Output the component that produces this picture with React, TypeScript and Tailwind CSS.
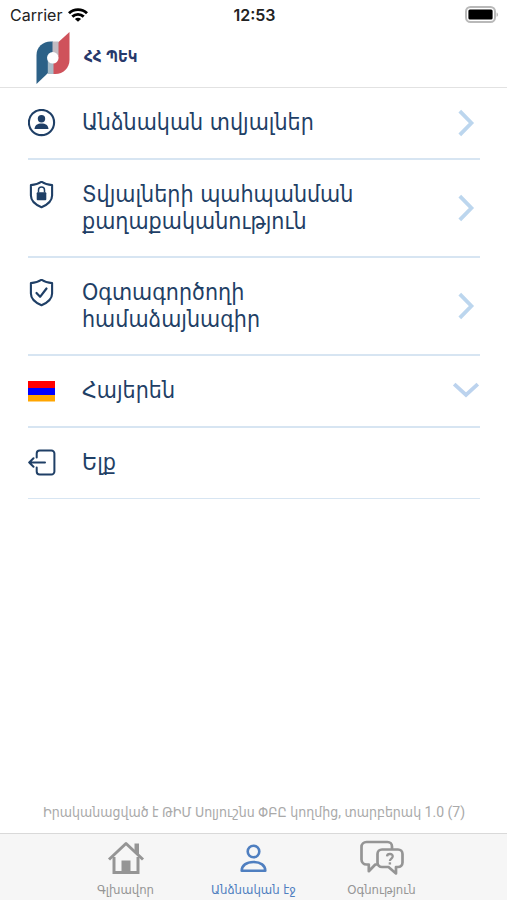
import React, { useState } from "react";

interface IconProps {
  className?: string;
}

const WifiIcon: React.FC<IconProps> = ({ className }) => (
  <svg viewBox="0 0 20 14" className={className} fill="none" stroke="currentColor" strokeWidth="2.9">
    <path d="M1 5.2C6 .4 14 .4 19 5.2" />
    <path d="M4.3 8.6c3.3-3 8.1-3 11.4 0" />
    <path d="M10 13.8 6.9 10.9c1.8-1.6 4.4-1.6 6.2 0Z" fill="currentColor" stroke="none" />
  </svg>
);

const BatteryIcon: React.FC<IconProps> = ({ className }) => (
  <svg viewBox="0 0 34 18" className={className}>
    <rect x="1" y="1" width="29" height="15" rx="4.5" fill="#fff" stroke="#b9b9b9" strokeWidth="2" />
    <rect x="3.4" y="3.6" width="24.2" height="9.8" rx="1.5" fill="#000" />
    <path d="M31.6 6.4c1.6.5 1.6 3.9 0 4.4Z" fill="#aaa" />
  </svg>
);

const Logo: React.FC<IconProps> = ({ className }) => (
  <svg viewBox="0 0 34 52" className={className}>
    <path d="M.5 52V23C.5 15 7 9.5 14.5 9.5H17V36l-5 5Z" fill="#2c6187" />
    <path d="M33.5 0v28c0 8-6.5 14-14 14H17V16l5.500-6Z" fill="#cf525b" />
    <path d="M16.5 9.5h6V24h-6Z" fill="#c3bcc2" />
    <path d="M11.8 27h5.7v15h-5.700Z" fill="#a9bcc8" />
    <circle cx="16.8" cy="25.8" r="5.8" fill="#fff" />
  </svg>
);

const ProfileIcon: React.FC<IconProps> = ({ className }) => (
  <svg viewBox="0 0 28 28" className={className}>
    <circle cx="13.5" cy="13.5" r="12.6" fill="none" stroke="currentColor" strokeWidth="2.1" />
    <circle cx="13.5" cy="9.7" r="3.7" fill="currentColor" />
    <path d="M6.5 19.9c.3-3.600 3-5.400 7-5.400s6.700 1.800 7 5.400Z" fill="currentColor" />
  </svg>
);

const SHIELD = "M13.5.7Q18 3.9 24.100 4.1v10.400c0 6.200-4.800 9.300-10.600 11.800C7.700 23.800 2.900 20.700 2.900 14.500V4.1Q9 3.9 13.500.7Z";

const ShieldLockIcon: React.FC<IconProps> = ({ className }) => (
  <svg viewBox="0 0 28 28" className={className} fill="none" stroke="currentColor">
    <path d={SHIELD} strokeWidth="2.1" strokeLinejoin="round" />
    <rect x="8.7" y="11.2" width="9.6" height="8" rx="1" fill="currentColor" stroke="none" />
    <path d="M10.500 11.5V9a3 3 0 0 1 6 0v2.500" strokeWidth="1.5" />
  </svg>
);

const ShieldCheckIcon: React.FC<IconProps> = ({ className }) => (
  <svg viewBox="0 0 28 28" className={className} fill="none" stroke="currentColor" strokeLinecap="round" strokeLinejoin="round">
    <path d={SHIELD} strokeWidth="2.1" />
    <path d="m8.5 14 3.600 3.800 6.400-8.300" strokeWidth="2.2" />
  </svg>
);

const FlagIcon: React.FC<IconProps> = ({ className }) => (
  <svg viewBox="0 0 28 28" className={className}>
    <path fill="#f00" d="M0 4h27v7H0z" />
    <path fill="#00f" d="M0 11h27v7H0z" />
    <path fill="#ffa500" d="M0 18h27v6.5H0z" />
  </svg>
);

const ExitIcon: React.FC<IconProps> = ({ className }) => (
  <svg viewBox="0 0 28 28" className={className} fill="none" stroke="currentColor" strokeWidth="2" strokeLinecap="round" strokeLinejoin="round">
    <path d="M8.7 8.500V4.500a3 3 0 0 1 3-3h11.700a3 3 0 0 1 3 3v18a3 3 0 0 1-3 3H11.700a3 3 0 0 1-3-3V18.500" />
    <path d="M17 13.500H1.200M5.500 9.300l-4.300 4.200 4.300 4.200" />
  </svg>
);

const ChevronRight: React.FC<IconProps> = ({ className }) => (
  <svg viewBox="0 0 28 28" className={className} fill="none" stroke="currentColor" strokeWidth="3.8">
    <path d="M7.8 2.200 19.400 14 7.800 25.800" />
  </svg>
);

const ChevronDown: React.FC<IconProps> = ({ className }) => (
  <svg viewBox="0 0 28 28" className={className} fill="none" stroke="currentColor" strokeWidth="3.8">
    <path d="M2.200 7.200 14 18l11.800-10.800" />
  </svg>
);

const HomeIcon: React.FC<IconProps> = ({ className }) => (
  <svg viewBox="0 0 44 40" className={className} fill="none" stroke="currentColor" strokeWidth="3">
    <path d="M5 21.500 22 5.500l17 16" strokeLinejoin="round" />
    <path d="M10 19v15.500h24V19" />
    <path d="M30.500 5.500h4.500v13l-4.500-4.500Z" fill="currentColor" stroke="none" />
    <path d="M17.500 22.500h9v12h-9z" fill="currentColor" stroke="none" />
  </svg>
);

const PersonIcon: React.FC<IconProps> = ({ className }) => (
  <svg viewBox="0 0 44 40" className={className} fill="none" stroke="currentColor" strokeWidth="2.6">
    <circle cx="21.500" cy="13.500" r="5.800" />
    <path d="M9.700 32.800c0-5.300 4.700-8.800 11.800-8.800s11.800 3.500 11.800 8.800Z" strokeLinejoin="round" />
  </svg>
);

const HelpIcon: React.FC<IconProps> = ({ className }) => (
  <svg viewBox="0 0 46 40" className={className} fill="none" stroke="currentColor" strokeWidth="2.7" strokeLinejoin="round">
    <path d="M33 11V8.500A4.500 4.500 0 0 0 28.500 4h-21a5 5 0 0 0-5 5v12.500a5 5 0 0 0 5 5h2.300v6.700l6.500-6.700h2.500" />
    <path d="M23 11.500h16a4.500 4.500 0 0 1 4.500 4.500v8.500A4.500 4.500 0 0 1 39 29h-2v6.500L29.500 29H23a4.500 4.500 0 0 1-4.500-4.500V16a4.500 4.500 0 0 1 4.500-4.500Z" />
    <path d="M28 18.300c.3-3.200 6-3 5.700.2-.2 2-2.800 2.200-2.800 4.500" strokeWidth="2.3" />
    <path d="M29.700 24.300h2.400v2.200h-2.400z" fill="currentColor" stroke="none" />
  </svg>
);

const rowClass =
  "flex w-full items-start border-b-2 border-[#d7e5f2] py-[21px] text-left last-of-type:border-b";
const labelClass = "ml-[26px] flex-1 text-[23px] leading-[27px]";

const menu = [
  { label: ["Անձնական տվյալներ"], icon: ProfileIcon },
  { label: ["Տվյալների պահպանման", "քաղաքականություն"], icon: ShieldLockIcon },
  { label: ["Օգտագործողի", "համաձայնագիր"], icon: ShieldCheckIcon },
];

const tabs = [
  { id: "home", label: "Գլխավոր", icon: HomeIcon },
  { id: "personal", label: "Անձնական էջ", icon: PersonIcon },
  { id: "help", label: "Օգնություն", icon: HelpIcon },
];

const App: React.FC = () => {
  const [activeTab, setActiveTab] = useState("personal");
  const [language, setLanguage] = useState("hy");

  return (
    <div className="flex min-h-screen flex-col bg-white font-['DejaVu_Sans_Condensed','DejaVu_Sans',sans-serif] text-[#1f3f66]">
      {/* Status bar */}
      <div className="grid h-[30px] grid-cols-3 items-center pl-2.5 pr-2 font-['Inter',sans-serif] text-base text-[#222]">
        <div className="flex items-center gap-1.5">
          <span>Carrier</span>
          <WifiIcon className="h-3.5 w-5 text-black" />
        </div>
        <span className="text-center font-semibold">12:53</span>
        <BatteryIcon className="h-[18px] w-[34px] justify-self-end" />
      </div>

      {/* Header */}
      <header className="flex h-[58px] items-center gap-3.5 border-b border-[#e2e2e2] pb-0.5 pl-9">
        <Logo className="h-[52px] w-[34px]" />
        <h1 className="text-[15px] font-bold text-[#27396b]">ՀՀ ՊԵԿ</h1>
      </header>

      <main className="flex flex-1 flex-col pl-7 pr-[27px]">
        {menu.map(({ label, icon: Icon }) => (
          <button key={label[0]} type="button" className={rowClass}>
            <Icon className="size-7" />
            <span className={labelClass}>
              {label.map((line) => (
                <span key={line} className="block">
                  {line}
                </span>
              ))}
            </span>
            <ChevronRight className="size-7 self-center text-[#bcd6ee]" />
          </button>
        ))}

        {/* Language */}
        <div className="flex w-full items-start border-b-2 border-[#d7e5f2] py-[21px]">
          <FlagIcon className="size-7" />
          <select
            aria-label="Լեզու"
            value={language}
            onChange={(e) => setLanguage(e.target.value)}
            className={`${labelClass} appearance-none bg-transparent outline-none`}
          >
            <option value="hy">Հայերեն</option>
            <option value="en">English</option>
            <option value="ru">Русский</option>
          </select>
          <ChevronDown className="size-7 text-[#bcd3ee]" />
        </div>

        <button type="button" className={rowClass}>
          <ExitIcon className="size-7" />
          <span className={labelClass}>Ելք</span>
        </button>

        <p className="mt-auto pb-3 text-center font-['Roboto','DejaVu_Sans_Condensed',sans-serif] text-sm leading-[18px] text-[#a9a9a9]">
          Իրականացված է ԹԻՄ Սոլյուշնս ՓԲԸ կողմից, տարբերակ 1.0 (7)
        </p>
      </main>

      {/* Tab bar */}
      <nav className="flex h-[67px] justify-center border-t border-[#d9d9d9] bg-[#f6f6f6]">
        {tabs.map(({ id, label, icon: Icon }) => (
          <button
            key={id}
            type="button"
            onClick={() => setActiveTab(id)}
            className={`flex w-32 flex-col items-center gap-1 pt-1 text-[13px] leading-4 ${
              activeTab === id ? "text-[#4f7fc0]" : "text-[#959595]"
            }`}
          >
            <Icon className="h-10 w-[46px]" />
            <span>{label}</span>
          </button>
        ))}
      </nav>
    </div>
  );
};

export default App;
